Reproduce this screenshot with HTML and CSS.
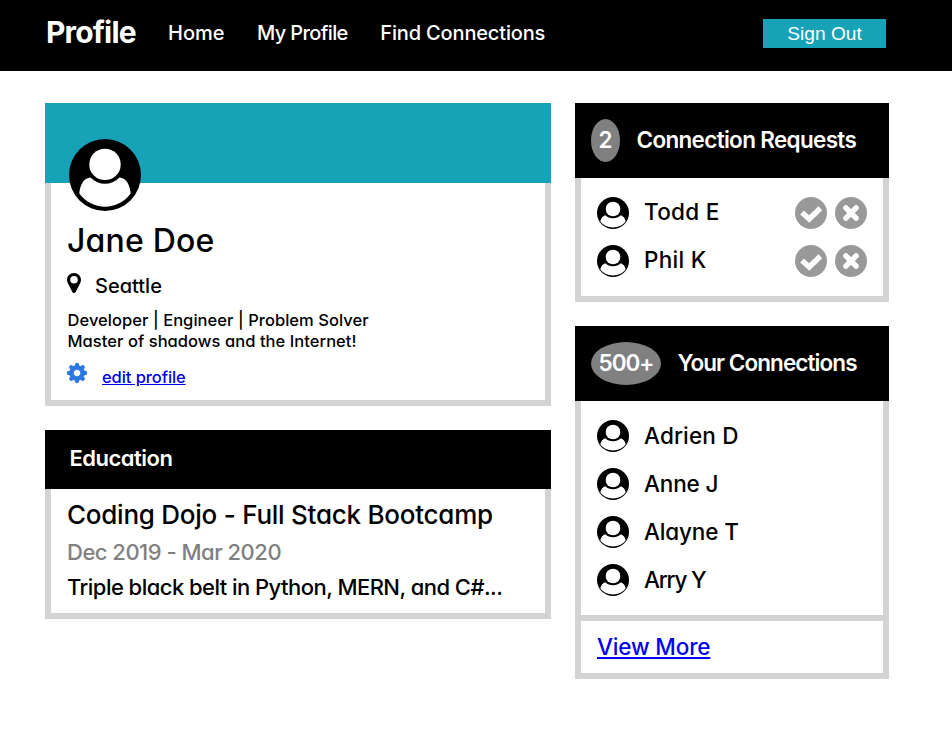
FILE: index.html
```
<!DOCTYPE html>
<html lang="en">
<head>
<meta charset="utf-8">
<title>Profile</title>
<link rel="stylesheet" href="styles.css">
</head>
<body>
<svg class="defs" aria-hidden="true">
  <symbol id="avatar" viewBox="0 0 72 72">
    <circle cx="36" cy="36" r="36"/>
    <circle cx="36" cy="25.4" r="15.7" fill="#fff"/>
    <path fill="#fff" d="M21.500 38.400C14.500 39 11 46 10.300 54.500C23 72 49 72 61.700 54.500C61 46 57.500 39 50.500 38.400C42 47 30 47 21.500 38.400Z"/>
  </symbol>
  <symbol id="avatar-small" viewBox="0 0 72 72">
    <circle cx="36" cy="36" r="36"/>
    <circle cx="36" cy="27" r="16.500" fill="#fff"/>
    <path fill="#fff" d="M18.500 41C12 43 9 48 7.500 54.500C20 73 52 73 64.500 54.500C63 48 60 43 53.500 41C45 50 27 50 18.500 41Z"/>
  </symbol>
  <symbol id="check" viewBox="0 0 32 32">
    <circle cx="16" cy="16" r="16" fill="#999"/>
    <path fill="none" stroke="#fff" stroke-width="5.400" d="M7 15.500L14.200 22L25.300 11.200"/>
  </symbol>
  <symbol id="cross" viewBox="0 0 32 32">
    <circle cx="16" cy="16" r="16" fill="#999"/>
    <path fill="none" stroke="#fff" stroke-width="5.400" stroke-linecap="round" d="M10.900 10.900L21.100 21.100M21.100 10.900L10.900 21.100"/>
  </symbol>
</svg>
<header class="topbar">
  <span class="brand">Profile</span>
  <nav class="nav">
    <span class="home">Home</span>
    <span class="mine">My Profile</span>
    <span class="find">Find Connections</span>
  </nav>
  <button class="signout">Sign Out</button>
</header>
<main class="page">
  <div class="column">
    <section>
      <div class="cover"><svg class="portrait"><use href="#avatar"/></svg></div>
      <div class="box profile">
        <h1><span class="fullname">Jane Doe</span></h1>
        <div class="place">
          <svg class="pin" viewBox="0 0 14 20"><path fill-rule="evenodd" d="M7 0C3 0 0 3 0 6.800C0 9 1 10.500 2 12.500L5.500 19.200C6.200 20.300 7.800 20.300 8.500 19.200L12 12.500C13 10.500 14 9 14 6.800C14 3 11 0 7 0ZM7 3A3.800 3.800 0 1 1 7 10.600A3.800 3.800 0 1 1 7 3Z"/></svg>
          <span class="city">Seattle</span>
        </div>
        <p class="bio"><span class="bio-one">Developer | Engineer | Problem Solver</span><br><span class="bio-two">Master of shadows and the Internet!</span></p>
        <div class="edit">
          <svg class="gear" viewBox="-10 -10 20 20">
            <circle r="5.500" fill="none" stroke="#2b78e4" stroke-width="4.400"/>
            <g fill="#2b78e4"><path id="tooth" d="M-2.400 -7L-1.500 -10H1.500L2.400 -7Z"/><use href="#tooth" transform="rotate(45)"/><use href="#tooth" transform="rotate(90)"/><use href="#tooth" transform="rotate(135)"/><use href="#tooth" transform="rotate(180)"/><use href="#tooth" transform="rotate(225)"/><use href="#tooth" transform="rotate(270)"/><use href="#tooth" transform="rotate(315)"/></g>
          </svg>
          <a class="edit-link" href="#">edit profile</a>
        </div>
      </div>
    </section>
    <section>
      <h2 class="bar"><span class="edu">Education</span></h2>
      <div class="box education">
        <h3><span class="school">Coding Dojo - Full Stack Bootcamp</span></h3>
        <p class="dates"><span class="range">Dec 2019 - Mar 2020</span></p>
        <p class="note"><span class="summary">Triple black belt in Python, MERN, and C#...</span></p>
      </div>
    </section>
  </div>
  <div class="column">
    <section>
      <div class="head"><span class="badge two">2</span><h2><span class="requests">Connection Requests</span></h2></div>
      <ul class="box people pending">
        <li><svg class="icon"><use href="#avatar-small"/></svg><span class="name todd">Todd E</span><svg class="icon"><use href="#check"/></svg><svg class="icon"><use href="#cross"/></svg></li>
        <li><svg class="icon"><use href="#avatar-small"/></svg><span class="name phil">Phil K</span><svg class="icon"><use href="#check"/></svg><svg class="icon"><use href="#cross"/></svg></li>
      </ul>
    </section>
    <section>
      <div class="head"><span class="badge many">500+</span><h2><span class="yours">Your Connections</span></h2></div>
      <ul class="box people all">
        <li><svg class="icon"><use href="#avatar-small"/></svg><span class="name adrien">Adrien D</span></li>
        <li><svg class="icon"><use href="#avatar-small"/></svg><span class="name anne">Anne J</span></li>
        <li><svg class="icon"><use href="#avatar-small"/></svg><span class="name alayne">Alayne T</span></li>
        <li><svg class="icon"><use href="#avatar-small"/></svg><span class="name arry">Arry Y</span></li>
      </ul>
      <div class="box more"><a class="more-link" href="#">View More</a></div>
    </section>
  </div>
</main>
</body>
</html>
```
FILE: styles.css
```
* { box-sizing: border-box; margin: 0; padding: 0; }
body { background: #fff; color: #000; font-family: Inter, sans-serif; font-weight: 500; font-feature-settings: "cv11"; }
.defs { position: absolute; width: 0; height: 0; }
h1, h2, h3 { font-size: inherit; font-weight: inherit; }
.topbar { height: 71px; background: #000; color: #fff; display: flex; padding: 12px 66px 0 46px; }
.brand { font-size: 30px; line-height: 40px; font-weight: 700; width: 122px; letter-spacing: -0.85px; }
.nav { display: flex; gap: 32.500px; padding-top: 9px; font-size: 20px; line-height: 24px; white-space: nowrap; }
.mine { letter-spacing: -0.62px; }
.find { letter-spacing: -0.15px; }
.signout { margin: 7px 0 0 auto; width: 123px; height: 29px; border: 0; background: #18a2b8; color: #fff; font: 19.200px "Liberation Sans", sans-serif; }
.page { display: grid; grid-template-columns: 506px 314px; gap: 24px; padding: 32px 45px; align-items: start; }
.column { display: grid; gap: 24px; }
.box { border: 6px solid #d3d3d3; border-top: 0; white-space: nowrap; }
.cover { height: 80px; background: #18a2b8; padding: 36px 0 0 24px; }
.portrait { position: relative; display: block; width: 72px; height: 72px; }
.profile { height: 223px; padding: 38px 0 0 16px; }
.profile h1 { font-size: 32px; line-height: 40px; letter-spacing: 0.2px; }
.place { display: flex; height: 24px; margin-top: 12px; gap: 14px; font-size: 20px; line-height: 27px; }
.pin { width: 14px; height: 20px; }
.bio { margin: 13px 0 0 0.500px; font-size: 16.500px; line-height: 21px; letter-spacing: 0.050px; }
.edit { display: flex; gap: 15px; margin-top: 11px; font-size: 16.500px; line-height: 29px; }
.edit-link { letter-spacing: -0.080px; }
.gear { width: 20px; height: 20px; }
a { color: #00e; text-decoration: underline; }
.bar { height: 59px; background: #000; color: #fff; padding-left: 24.500px; font-size: 22px; line-height: 57px; font-weight: 600; letter-spacing: -0.500px; }
.education { height: 130px; padding: 10px 0 0 16px; font-size: 22px; line-height: 28px; }
.education h3 { font-size: 26px; line-height: 31px; letter-spacing: -0.250px; }
.dates { color: #808080; margin-top: 8px; letter-spacing: -0.500px; }
.note { margin-top: 7px; letter-spacing: -0.540px; }
.head { height: 75px; background: #000; color: #fff; display: flex; padding: 16px 16px 0; font-size: 22.500px; font-weight: 600; line-height: 42px; white-space: nowrap; }
.badge { height: 43px; background: #808080; border-radius: 50%; text-align: center; margin-right: 16.500px; line-height: 42px; }
.two { width: 29px; }
.many { width: 70px; letter-spacing: -1px; }
.requests { letter-spacing: -0.680px; }
.yours { letter-spacing: -0.920px; }
.people { list-style: none; padding: 19px 16px 0; display: flex; flex-direction: column; gap: 16px; }
.people li { display: flex; gap: 8px; height: 32px; }
.icon { width: 32px; height: 32px; flex: none; }
.name { flex: 1; margin-left: 7px; font-size: 22.500px; line-height: 30px; }
.todd, .phil { letter-spacing: 0.300px; }
.adrien { letter-spacing: 0.150px; }
.alayne, .anne { letter-spacing: -0.150px; }
.arry { letter-spacing: -1.200px; }
.pending { height: 124px; }
.all { height: 220px; }
.all .name { line-height: 32px; }
.more { height: 58px; padding: 10px 0 0 16px; font-size: 22.500px; line-height: 32px; }
.more-link { letter-spacing: -0.150px; }
```
